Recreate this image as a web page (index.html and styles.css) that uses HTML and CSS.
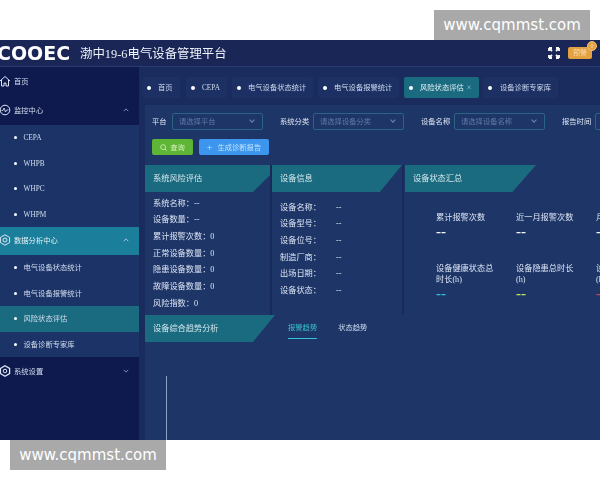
FILE: index.html
```html
<!DOCTYPE html>
<html lang="zh-CN">

<head>
    <meta charset="UTF-8">
    <title>渤中19-6电气设备管理平台</title>
    <link rel="stylesheet" href="styles.css">
</head>

<body>
    <div class="mark mark-top">www.cqmmst.com</div>

    <div class="app">
        <header class="topbar">
            <div class="logo">COOEC</div>
            <div class="app-title">渤中19-6电气设备管理平台</div>
            <svg class="full-icon" viewBox="0 0 12 12" width="12" height="12">
                <path d="M1 1l3 3M1 1v3M1 1h3M11 1l-3 3M11 1v3M11 1h-3M1 11l3-3M1 11v-3M1 11h3M11 11l-3-3M11 11v-3M11 11h-3" stroke="#fff" stroke-width="1.8" fill="none" />
            </svg>
            <div class="alarm">预警<span class="alarm-dot">0</span></div>
        </header>

        <div class="body-row">
            <nav class="sidebar">
                <div class="nav-item">
                    <svg class="nav-icon" viewBox="0 0 12 12" width="12" height="12">
                        <path d="M1 6l5-4.500L11 6M2.500 5v6h2.500V8h2v3h2.500V5" stroke="#dfe6f5" stroke-width="1" fill="none" />
                    </svg>
                    <span>首页</span>
                </div>
                <div class="nav-item">
                    <svg class="nav-icon" viewBox="0 0 12 12" width="12" height="12">
                        <circle cx="6" cy="6" r="4.800" stroke="#dfe6f5" fill="none" />
                        <path d="M2.500 6.500h1.500l1-2.500 1.500 4 1-2h2" stroke="#dfe6f5" stroke-width=".8" fill="none" />
                    </svg>
                    <span>监控中心</span>
                    <svg class="chev" viewBox="0 0 8 5" width="6" height="4"><path d="M1 4l3-3 3 3" stroke="#9fb0d0" fill="none" /></svg>
                </div>
                <div class="sub-list">
                    <div class="sub-item">CEPA</div>
                    <div class="sub-item">WHPB</div>
                    <div class="sub-item">WHPC</div>
                    <div class="sub-item">WHPM</div>
                </div>
                <div class="nav-item nav-active">
                    <svg class="nav-icon" viewBox="0 0 12 12" width="12" height="12">
                        <path d="M6 .8l4.600 2.600v5.200L6 11.200 1.400 8.600V3.400z" stroke="#dfe6f5" fill="none" />
                        <circle cx="6" cy="6" r="2" stroke="#dfe6f5" fill="none" />
                    </svg>
                    <span>数据分析中心</span>
                    <svg class="chev" viewBox="0 0 8 5" width="6" height="4"><path d="M1 4l3-3 3 3" stroke="#cfe0ee" fill="none" /></svg>
                </div>
                <div class="sub-list">
                    <div class="sub-item">电气设备状态统计</div>
                    <div class="sub-item">电气设备报警统计</div>
                    <div class="sub-item sub-active">风险状态评估</div>
                    <div class="sub-item">设备诊断专家库</div>
                </div>
                <div class="nav-item">
                    <svg class="nav-icon" viewBox="0 0 12 12" width="12" height="12">
                        <path d="M6 .8l4.600 2.600v5.200L6 11.200 1.400 8.600V3.400z" stroke="#dfe6f5" stroke-width="1.300" fill="none" />
                        <circle cx="6" cy="6" r="1.800" stroke="#dfe6f5" fill="none" />
                    </svg>
                    <span>系统设置</span>
                    <svg class="chev" viewBox="0 0 8 5" width="6" height="4"><path d="M1 1l3 3 3-3" stroke="#9fb0d0" fill="none" /></svg>
                </div>
            </nav>

            <main class="main">
                <div class="tabs">
                    <div class="tab tab-home">首页</div>
                    <div class="tab tab-cepa">CEPA</div>
                    <div class="tab tab-long">电气设备状态统计</div>
                    <div class="tab tab-long">电气设备报警统计</div>
                    <div class="tab tab-on">风险状态评估<span class="tab-close">×</span></div>
                    <div class="tab tab-last">设备诊断专家库</div>
                </div>

                <section class="panel">
                    <div class="filters">
                        <label class="f-label f-short">平台</label>
                        <div class="select">请选择平台<i class="caret"></i></div>
                        <label class="f-label">系统分类</label>
                        <div class="select">请选择设备分类<i class="caret"></i></div>
                        <label class="f-label">设备名称</label>
                        <div class="select">请选择设备名称<i class="caret"></i></div>
                        <label class="f-label">报告时间</label>
                        <div class="select"></div>
                    </div>
                    <div class="actions">
                        <button class="btn btn-green">
                            <svg viewBox="0 0 8 8" width="7" height="7"><circle cx="3.600" cy="3.600" r="2.800" stroke="#cdeeb4" fill="none" /><path d="M5.600 5.600l2 2" stroke="#cdeeb4" /></svg>
                            查询
                        </button>
                        <button class="btn btn-blue"><span class="plus">+</span>生成诊断报告</button>
                    </div>

                    <div class="cards">
                        <div class="card card-risk">
                            <div class="card-head">系统风险评估</div>
                            <div class="risk-rows">
                                <div>系统名称：--</div>
                                <div>设备数量：--</div>
                                <div>累计报警次数：0</div>
                                <div>正常设备数量：0</div>
                                <div>隐患设备数量：0</div>
                                <div>故障设备数量：0</div>
                                <div>风险指数：0</div>
                            </div>
                        </div>
                        <div class="card card-info">
                            <div class="card-head">设备信息</div>
                            <div class="info-rows">
                                <div><span>设备名称：</span>--</div>
                                <div><span>设备型号：</span>--</div>
                                <div><span>设备位号：</span>--</div>
                                <div><span>制造厂商：</span>--</div>
                                <div><span>出场日期：</span>--</div>
                                <div><span>设备状态：</span>--</div>
                            </div>
                        </div>
                        <div class="card card-sum">
                            <div class="card-head">设备状态汇总</div>
                            <div class="stats">
                                <div class="stat"><p>累计报警次数</p><b>--</b></div>
                                <div class="stat"><p>近一月报警次数</p><b>--</b></div>
                                <div class="stat"><p>月度报警次数</p><b>--</b></div>
                                <div class="stat"><p>设备健康状态总时长(h)</p><b class="c-cyan">--</b></div>
                                <div class="stat"><p>设备隐患总时长(h)</p><b class="c-lime">--</b></div>
                                <div class="stat"><p>设备故障总时长(h)</p><b class="c-red">--</b></div>
                            </div>
                        </div>
                    </div>

                    <div class="trend">
                        <div class="card-head trend-head">设备综合趋势分析</div>
                        <div class="trend-tabs">
                            <span class="t-on">报警趋势</span>
                            <span>状态趋势</span>
                        </div>
                    </div>
                    <div class="chart"><div class="axis"></div></div>
                </section>
            </main>
        </div>
    </div>

    <div class="mark mark-bottom">www.cqmmst.com</div>
</body>

</html>
```

FILE: styles.css
```css
* {
    box-sizing: border-box;
}

html,
body {
    margin: 0;
    padding: 0;
    height: 480px;
    overflow: hidden;
    background: #fff;
}

body {
    position: relative;
    padding-top: 40px;
    font-family: "Liberation Serif", "Noto Sans CJK SC", serif;
}

.mark {
    position: absolute;
    width: 156px;
    height: 30px;
    background: #a9a9a9;
    color: #fff;
    font: 15px/30px "DejaVu Sans", sans-serif;
    text-align: center;
    z-index: 5;
}

.mark-top {
    top: 10px;
    left: 434px;
}

.mark-bottom {
    top: 440px;
    left: 10px;
}

.app {
    width: 600px;
    height: 400px;
    background: #1a2b5e;
    overflow: hidden;
    color: #dce5f4;
    filter: blur(0.35px);
}

.topbar {
    display: flex;
    align-items: center;
    height: 27px;
    background: #1a2655;
    border-bottom: 1px solid #283a70;
    padding-right: 8px;
}

.logo {
    margin-left: -3px;
    width: 83px;
    font: bold 19px/1 "DejaVu Sans", sans-serif;
    color: #fff;
    white-space: nowrap;
}

.app-title {
    flex: 1;
    font-size: 12.400px;
    color: #eef2fa;
}

.full-icon {
    margin-right: 8px;
}

.alarm {
    position: relative;
    width: 24px;
    height: 12px;
    background: #e3a140;
    border-radius: 2px;
    font-size: 7px;
    line-height: 12px;
    text-align: center;
    color: #f7dcae;
}

.alarm-dot {
    position: absolute;
    top: -6px;
    right: -5px;
    width: 10px;
    height: 10px;
    border-radius: 50%;
    background: #e3a140;
    border: 1px solid #f0c27c;
    font-size: 6px;
    line-height: 8px;
}

.body-row {
    display: flex;
    height: 373px;
}

.sidebar {
    width: 139px;
    flex: none;
    background: #0e1a4e;
    font-size: 7.300px;
}

.nav-item {
    display: flex;
    align-items: center;
    height: 29px;
    padding: 0 10px 2px 0;
    color: #d6dff0;
}

.nav-icon {
    margin-right: 3px;
    margin-left: -1px;
    flex: none;
}

.chev {
    margin-left: auto;
}

.nav-active {
    height: 28px;
    background: #1b7e9a;
    color: #e6f2f8;
}

.sub-list {
    background: #1b3367;
}

.sub-item {
    position: relative;
    height: 25.500px;
    line-height: 25.500px;
    padding-left: 23.500px;
    font-size: 7.300px;
    color: #d3ddef;
}

.sub-item::before {
    content: "";
    position: absolute;
    left: 14px;
    top: 11px;
    width: 3px;
    height: 3px;
    border-radius: 50%;
    background: #fff;
}

.sub-active {
    background: #1b6b80;
}

.main {
    flex: 1;
    min-width: 0;
    background: #1a2b5e;
}

.tabs {
    display: flex;
    height: 38px;
    padding: 10px 0 0 3px;
    font-size: 7.300px;
}

.tab {
    position: relative;
    height: 21px;
    line-height: 21px;
    margin-right: 5px;
    padding-left: 16px;
    background: #1c3064;
    border-radius: 2px;
    color: #cfdaee;
    white-space: nowrap;
}

.tab::before {
    content: "";
    position: absolute;
    left: 5px;
    top: 8.500px;
    width: 4px;
    height: 4px;
    border-radius: 50%;
    background: #fff;
}

.tab-home {
    width: 38px;
    margin-right: 6px;
}

.tab-cepa {
    width: 41px;
}

.tab-long {
    width: 81px;
}

.tab-on {
    width: 75px;
    background: #1b6b80;
    color: #e3f0f6;
    margin-right: 4px;
}

.tab-last {
    width: 75px;
    padding-left: 17px;
}

.tab-close {
    margin-left: 3px;
    font-size: 8px;
    color: #a8c4d4;
}

.panel {
    margin-left: 6px;
    width: 600px;
    height: 335px;
    background: #1e3567;
}

.filters {
    display: flex;
    height: 33px;
    padding: 8px 0 0 7px;
    font-size: 7.300px;
    line-height: 17px;
}

.f-label {
    width: 29px;
    margin-right: 4px;
    white-space: nowrap;
    color: #e1e8f5;
}

.f-short {
    width: 17px;
    margin-right: 3px;
}

.select {
    position: relative;
    width: 91px;
    height: 17px;
    margin-right: 17px;
    padding-left: 6px;
    line-height: 15px;
    border: 1px solid #2b6387;
    border-radius: 2px;
    color: #5f7ba6;
}

.caret {
    position: absolute;
    right: 8px;
    top: 4px;
    width: 4px;
    height: 4px;
    border-right: 1px solid #6d88ad;
    border-bottom: 1px solid #6d88ad;
    transform: rotate(45deg);
}

.actions {
    display: flex;
    gap: 6px;
    height: 27px;
    padding: 1px 0 0 7px;
}

.btn {
    display: flex;
    align-items: center;
    justify-content: center;
    gap: 3px;
    height: 16px;
    padding: 0;
    border: 0;
    border-radius: 2px;
    font-family: inherit;
    font-size: 7.300px;
}

.btn-green {
    width: 41px;
    background: #5fb636;
    color: #d3efbd;
}

.btn-blue {
    width: 70px;
    background: #3c96ee;
    color: #c5e2fb;
}

.plus {
    font-size: 10px;
    margin-right: 2px;
}

.cards {
    display: flex;
    height: 150px;
}

.card {
    flex: none;
    font-size: 8.200px;
}

.card-head {
    height: 27px;
    line-height: 27px;
    padding-left: 8px;
    background: #1b6b80;
    color: #d5e8ee;
    font-size: 8.200px;
}

.card-risk {
    width: 125px;
}

.card-risk .card-head {
    clip-path: polygon(0 0, 100% 0, 100% 10px, 108px 100%, 0 100%);
}

.card-info {
    width: 134px;
    border-left: 2px solid #192a5a;
    border-right: 2px solid #192a5a;
}

.card-info .card-head {
    clip-path: polygon(0 0, 100% 0, 83% 100%, 0 100%);
}

.card-sum {
    width: 330px;
    margin-left: 1px;
}

.card-sum .card-head {
    width: 131px;
    clip-path: polygon(0 0, 100% 0, 82% 100%, 0 100%);
}

.risk-rows {
    padding: 3.500px 0 0 8px;
    line-height: 16.700px;
}

.info-rows {
    padding: 7.500px 0 0 8px;
    line-height: 16.700px;
}

.info-rows span {
    display: inline-block;
    width: 56px;
}

.stats {
    display: grid;
    grid-template-columns: repeat(3, 80px);
    grid-template-rows: 51px 50px;
    padding: 20px 0 0 31px;
}

.stat p {
    margin: 0;
    width: 60px;
    line-height: 11px;
}

.stat:nth-child(-n+3) p {
    width: 70px;
    white-space: nowrap;
}

.stat b {
    display: block;
    margin-top: 2px;
    font-size: 15px;
    line-height: 12px;
    color: #f2f5fb;
}

.c-cyan {
    color: #35c3dc !important;
}

.c-lime {
    color: #c4e05f !important;
}

.c-red {
    color: #d8405a !important;
}

.trend {
    display: flex;
    height: 26px;
}

.trend-head {
    width: 130px;
    flex: none;
    clip-path: polygon(0 0, 100% 0, 83% 100%, 0 100%);
}

.trend-tabs {
    display: flex;
    gap: 21px;
    margin-left: 13px;
    font-size: 7.300px;
    color: #cfdcf0;
    line-height: 26px;
}

.t-on {
    height: 24px;
    color: #35c3c9;
    border-bottom: 1px solid #35c3dc;
}

.chart {
    padding: 35px 0 0 21px;
}

.axis {
    width: 1px;
    height: 64px;
    background: #8ea2c6;
}
```
